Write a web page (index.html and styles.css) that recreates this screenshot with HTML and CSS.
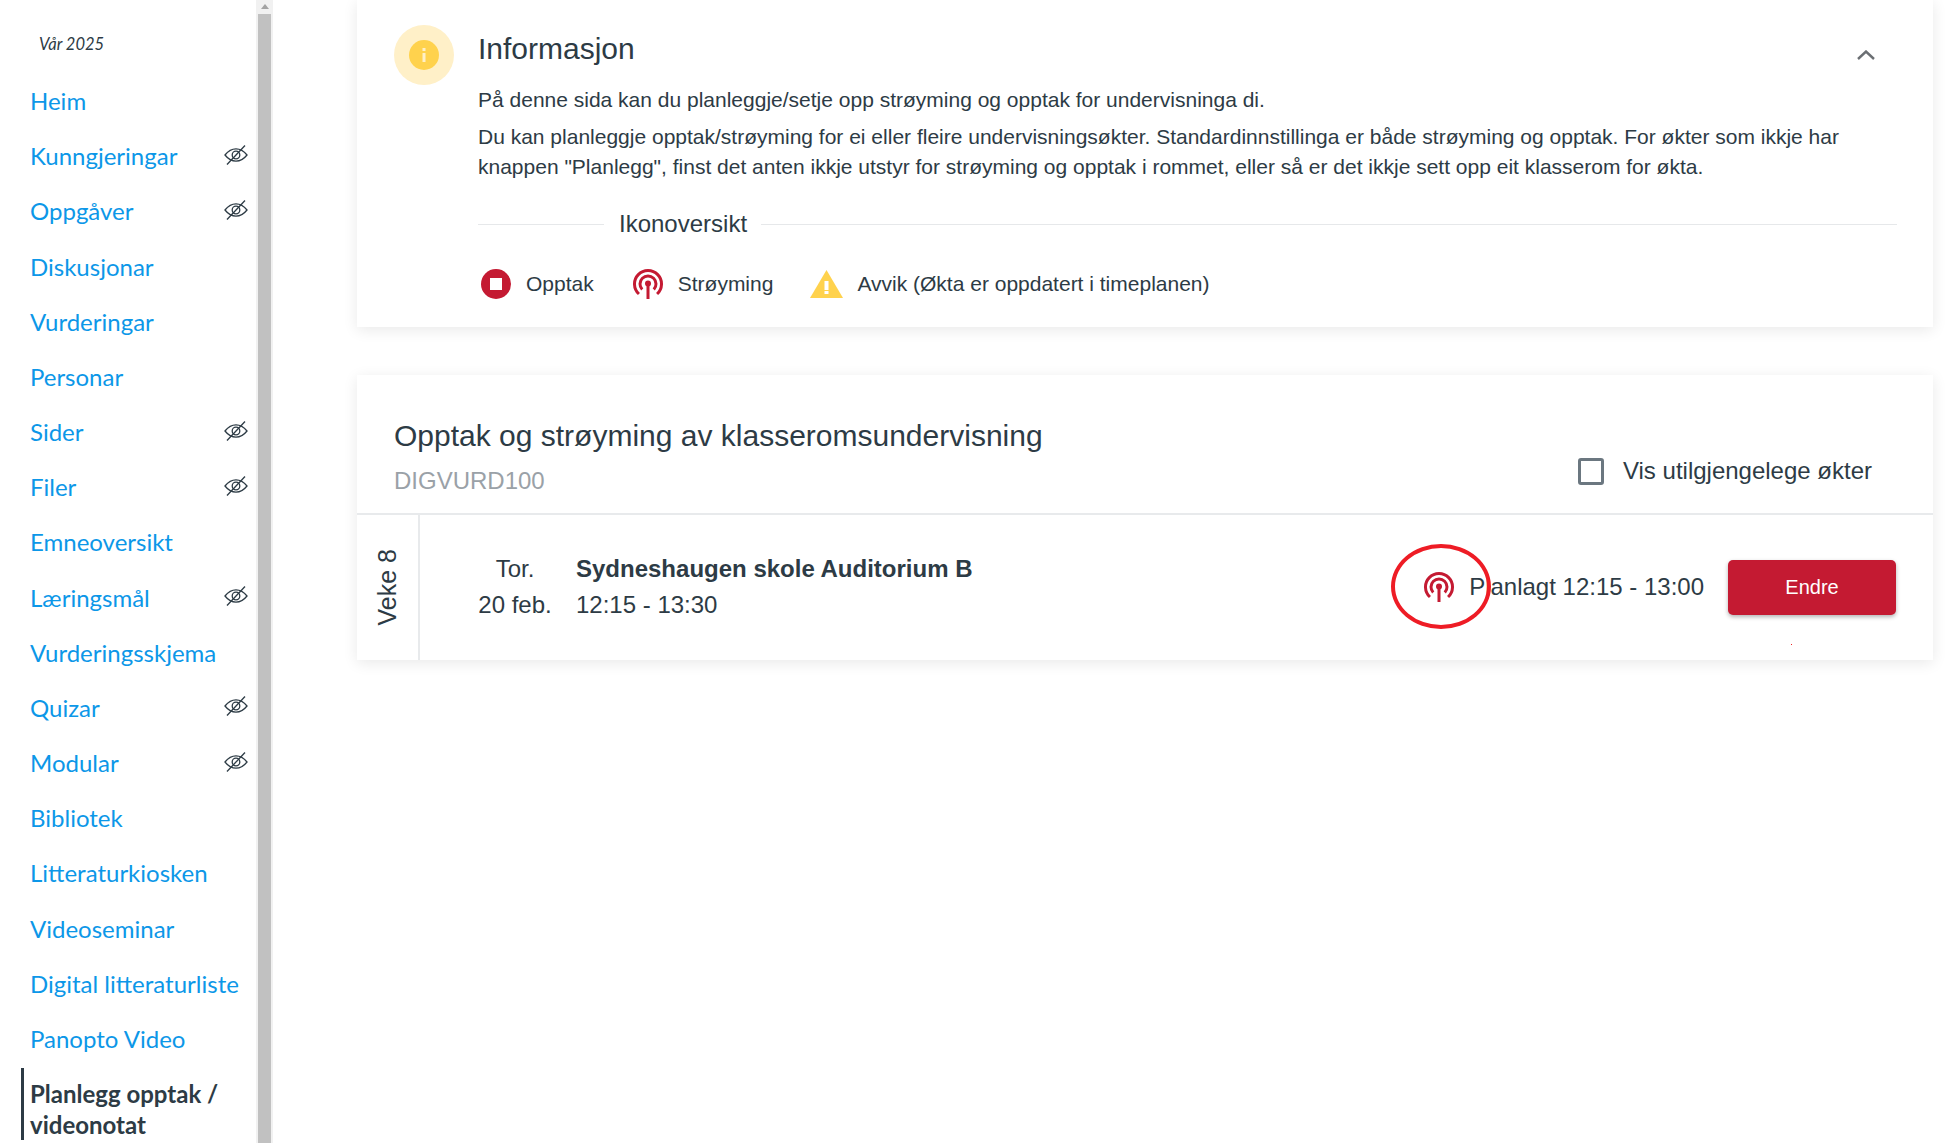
FILE: index.html
```html
<!DOCTYPE html>
<html lang="nn">
<head>
<meta charset="utf-8">
<title>Planlegg opptak</title>
<link rel="stylesheet" href="styles.css">
</head>
<body>
<svg class="defs" width="0" height="0" aria-hidden="true">
  <defs>
    <symbol id="eye" viewBox="0 0 24 20">
      <path d="M1 10C4.500 5.600 8 3.800 12 3.800S19.500 5.600 23 10C19.500 14.400 16 16.200 12 16.200S4.500 14.400 1 10Z" fill="none" stroke="currentColor" stroke-width="1.300"/>
      <circle cx="12" cy="10" r="3.800" fill="none" stroke="currentColor" stroke-width="1.300"/>
      <path d="M3 19.500L21 .5" fill="none" stroke="currentColor" stroke-width="1.300"/>
    </symbol>
    <symbol id="cast" viewBox="0 0 30 30">
      <path d="M5.930 25A13.500 13.500 0 1 1 24.070 25" fill="none" stroke="currentColor" stroke-width="3"/>
      <path d="M9.200 20.500A8 8 0 1 1 20.800 20.500" fill="none" stroke="currentColor" stroke-width="3"/>
      <circle cx="15" cy="14.500" r="3" fill="currentColor"/>
      <rect x="13.500" y="15" width="3" height="15" fill="currentColor"/>
    </symbol>
  </defs>
</svg>
<div class="app">
  <aside class="sidebar">
    <nav class="nav">
      <div class="term">Vår 2025</div>
      <a class="item">Heim</a>
      <a class="item">Kunngjeringar<svg class="eye"><use href="#eye"/></svg></a>
      <a class="item">Oppgåver<svg class="eye"><use href="#eye"/></svg></a>
      <a class="item">Diskusjonar</a>
      <a class="item">Vurderingar</a>
      <a class="item">Personar</a>
      <a class="item">Sider<svg class="eye"><use href="#eye"/></svg></a>
      <a class="item">Filer<svg class="eye"><use href="#eye"/></svg></a>
      <a class="item">Emneoversikt</a>
      <a class="item">Læringsmål<svg class="eye"><use href="#eye"/></svg></a>
      <a class="item">Vurderingsskjema</a>
      <a class="item">Quizar<svg class="eye"><use href="#eye"/></svg></a>
      <a class="item">Modular<svg class="eye"><use href="#eye"/></svg></a>
      <a class="item">Bibliotek</a>
      <a class="item">Litteraturkiosken</a>
      <a class="item">Videoseminar</a>
      <a class="item">Digital litteraturliste</a>
      <a class="item">Panopto Video</a>
      <a class="item active">Planlegg opptak /<br>videonotat</a>
    </nav>
    <div class="scrollbar">
      <div class="scroll-up"></div>
      <div class="scroll-thumb"></div>
    </div>
  </aside>
  <main class="main">
    <section class="card info">
      <div class="info-badge">
        <svg class="info-dot" viewBox="0 0 30 30"><circle cx="15" cy="15" r="15" fill="#ffd24d"/><rect x="13.500" y="8" width="3" height="3" fill="#fff0c8"/><rect x="13.500" y="13" width="3" height="9" fill="#fff0c8"/></svg>
      </div>
      <div class="info-body">
        <h2 class="info-title">Informasjon</h2>
        <p class="para first">På denne sida kan du planleggje/setje opp strøyming og opptak for undervisninga di.</p>
        <p class="para">Du kan planleggje opptak/strøyming for ei eller fleire undervisningsøkter. Standardinnstillinga er både strøyming og opptak. For økter som ikkje har knappen "Planlegg", finst det anten ikkje utstyr for strøyming og opptak i rommet, eller så er det ikkje sett opp eit klasserom for økta.</p>
        <div class="divider"><span class="divider-label">Ikonoversikt</span></div>
        <div class="legend">
          <div class="legend-item"><span class="stop"><span class="stop-square"></span></span>Opptak</div>
          <div class="legend-item"><svg class="cast"><use href="#cast"/></svg>Strøyming</div>
          <div class="legend-item">
            <svg class="warn" viewBox="0 0 33 28"><path d="M16.500 0L33 28H0Z" fill="#ffd24d"/><rect x="14.500" y="11" width="4" height="9" fill="#fff"/><rect x="14.500" y="21" width="4" height="3" fill="#fff"/></svg>
            Avvik (Økta er oppdatert i timeplanen)
          </div>
        </div>
      </div>
      <svg class="chevron" viewBox="0 0 18 10"><path d="M1 9L9 1.500L17 9" fill="none" stroke="#6b6f73" stroke-width="2.400"/></svg>
    </section>
    <section class="card sessions">
      <header class="sessions-head">
        <div>
          <h1 class="sessions-title">Opptak og strøyming av klasseromsundervisning</h1>
          <div class="course">DIGVURD100</div>
        </div>
        <label class="show-all"><span class="checkbox"></span>Vis utilgjengelege økter</label>
      </header>
      <div class="row">
        <div class="week"><span class="week-label">Veke 8</span></div>
        <div class="date">Tor.<br>20 feb.</div>
        <div class="place"><strong>Sydneshaugen skole Auditorium B</strong><br>12:15 - 13:30</div>
        <div class="status"><svg class="cast small"><use href="#cast"/></svg>Planlagt 12:15 - 13:00</div>
        <button class="btn">Endre</button>
      </div>
    </section>
  </main>
</div>
<div class="ring"></div>
<div class="speck"></div>
</body>
</html>
```
FILE: styles.css
```css
* { box-sizing: border-box; }
html, body { margin: 0; height: 100%; overflow: hidden; background: #fff; }
body { font-family: "Liberation Sans", Arial, sans-serif; color: #2d3b45; position: relative; }
.defs { position: absolute; }
.app { display: flex; height: 1143px; }

.sidebar { width: 273px; flex: none; display: flex; overflow: hidden; }
.nav { width: 256px; flex: none; padding: 34px 0 0 21px; font-family: Lato, sans-serif; }
.term { font-style: italic; font-size: 16.500px; line-height: 20px; padding-left: 18px; margin-bottom: 19px; color: #2d3b45; }
.item { display: flex; align-items: center; justify-content: space-between; height: 55.180px; padding: 0 8px 0 9px; color: #0c97e8; font-size: 24px; }
.item.active { display: block; height: auto; margin-top: 2px; padding: 11px 0 0 6px; border-left: 3px solid #2d3b45; color: #2d3b45; font-weight: 700; line-height: 30.500px; }
.eye { width: 24px; height: 20px; color: #2d3b45; margin-top: -2px; }
.scrollbar { width: 17px; flex: none; background: #f1f1f1; padding: 0 2px 0 2px; }
.scroll-up { height: 14px; position: relative; }
.scroll-up::after { content: ""; position: absolute; left: 2.500px; top: 4px; border: 4px solid transparent; border-top: 0; border-bottom: 5px solid #a3a3a3; }
.scroll-thumb { height: 1129px; background: #c1c1c1; }

.main { width: 1664px; flex: none; padding: 0 0 0 84px; }
.card { width: 1576px; background: #fff; box-shadow: 0 3px 14px rgba(0, 0, 0, .09); }

.info { height: 327px; display: flex; padding: 25px 36px 0 37px; position: relative; }
.info-badge { width: 60px; height: 60px; border-radius: 50%; background: #fff0c8; display: flex; align-items: center; justify-content: center; flex: none; }
.info-dot { width: 30px; height: 30px; }
.info-body { margin-left: 24px; flex: 1; min-width: 0; }
.info-title { margin: 6px 0 0; font-weight: 400; font-size: 30px; line-height: 36px; }
.para { margin: 0; font-size: 21px; line-height: 30px; }
.para.first { margin: 18px 0 7px; }
.divider { display: flex; align-items: center; margin-top: 27px; height: 30px; font-size: 24px; }
.divider::before, .divider::after { content: ""; height: 1px; background: #e6e8ea; }
.divider::before { width: 126px; }
.divider::after { flex: 1; }
.divider-label { padding: 0 14px 0 15px; }
.legend { display: flex; gap: 37px; margin-top: 30px; font-size: 21px; }
.legend-item { display: flex; align-items: center; height: 30px; }
.stop { width: 30px; height: 30px; margin: 0 15px 0 3px; border-radius: 50%; background: #c41a32; display: flex; align-items: center; justify-content: center; }
.stop-square { width: 12px; height: 12px; background: #fff; }
.cast { width: 30px; height: 30px; color: #c41a32; margin: 0 15px 0 2px; }
.warn { width: 33px; height: 28px; margin-right: 14px; }
.chevron { position: absolute; right: 58px; top: 50px; width: 18px; height: 10px; }

.sessions { margin-top: 48px; height: 285px; }
.sessions-head { height: 140px; border-bottom: 2px solid #e8eaec; padding: 41px 61px 0 37px; display: flex; justify-content: space-between; }
.sessions-title { margin: 0; font-weight: 400; font-size: 30px; line-height: 40px; }
.course { margin-top: 10px; font-size: 24px; line-height: 30px; color: #9aa1a7; }
.show-all { display: flex; align-items: center; height: 30px; margin-top: 40px; font-size: 24px; }
.checkbox { width: 26px; height: 27px; border: 3px solid #6b7780; border-radius: 3px; margin-right: 19px; }
.row { display: flex; align-items: center; height: 145px; padding-right: 37px; }
.week { width: 63px; height: 100%; border-right: 2px solid #e8eaec; display: flex; align-items: center; justify-content: center; flex: none; }
.week-label { writing-mode: vertical-rl; transform: rotate(180deg); font-size: 25px; }
.date { width: 74px; margin-left: 58px; text-align: center; font-size: 24px; line-height: 36px; white-space: nowrap; flex: none; margin-top: -2px; }
.place { margin-left: 24px; flex: 1; font-size: 24px; line-height: 36px; margin-top: -2px; }
.status { display: flex; align-items: center; font-size: 24px; margin: -1px 24px 0 0; line-height: 30px; }
.cast.small { margin: 0 15px 0 0; }
.btn { width: 168px; height: 55px; border: 0; border-radius: 5px; background: #c41a32; color: #fff; font: 20px "Liberation Sans", Arial, sans-serif; box-shadow: 0 2px 4px rgba(0, 0, 0, .3); }

.ring { position: absolute; left: 1391px; top: 544px; width: 100px; height: 85px; border: 4px solid #ee1c25; border-radius: 50%; }
.speck { position: absolute; left: 1791px; top: 644px; width: 1px; height: 1px; background: #e22; }
```
